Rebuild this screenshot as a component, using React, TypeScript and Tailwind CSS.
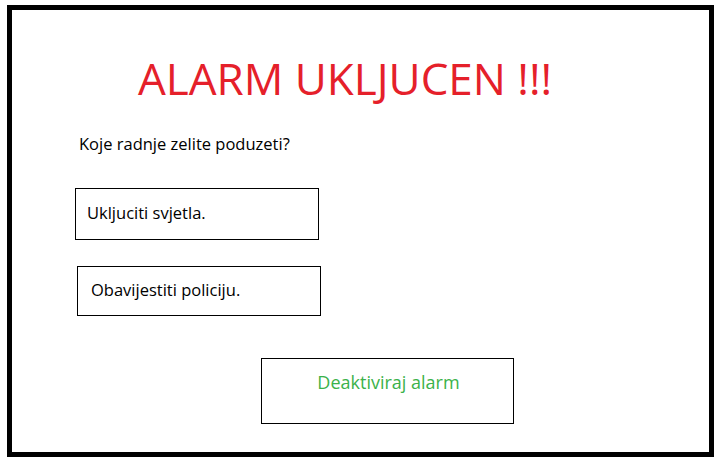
import React from "react";

export default function App() {
  return (
    <div className="w-[720px] h-[466px] bg-white pl-[7px] pt-[5px]" style={{ fontFamily: '"Open Sans", sans-serif' }}>
      <div className="w-[707px] h-[452px] border-[5px] border-black flex flex-col">
        <div className="pl-[126px] pt-[43px] text-[44px] leading-[50px] text-[#e5202a] whitespace-nowrap">
          ALARM UKLJUCEN !!!
        </div>
        <div className="pl-[67px] mt-[30px] text-[16.5px] leading-[22px] text-black whitespace-nowrap">
          Koje radnje zelite poduzeti?
        </div>
        <div className="ml-[63px] mt-[33px] w-[244px] h-[52px] border border-black flex items-center pl-[11px] pb-[2px] text-[16.5px] text-black whitespace-nowrap">
          Ukljuciti svjetla.
        </div>
        <div className="ml-[65px] mt-[26px] w-[244px] h-[50px] border border-black flex items-center pl-[13px] pb-[2px] text-[16.5px] text-black whitespace-nowrap">
          Obavijestiti policiju.
        </div>
        <div className="ml-[249px] mt-[42px] w-[253px] h-[66px] border border-black flex justify-center pt-[10px] pl-[2px] text-[18px] text-[#3bb24a] whitespace-nowrap">
          Deaktiviraj alarm
        </div>
      </div>
    </div>
  );
}
